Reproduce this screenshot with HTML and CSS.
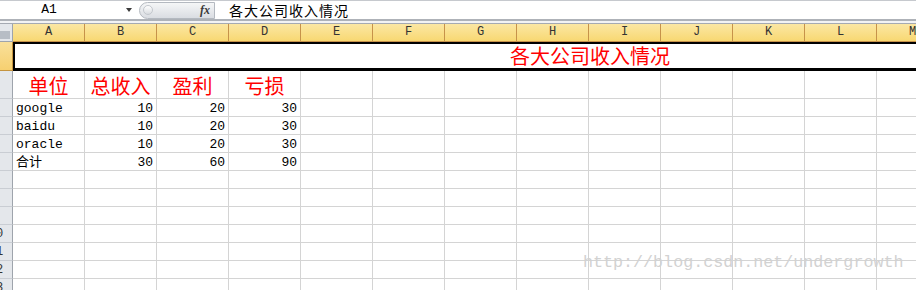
FILE: index.html
```html
<!DOCTYPE html>
<html lang="zh-CN">
<head>
    <meta charset="UTF-8">
    <title>各大公司收入情况</title>
    <link rel="stylesheet" href="styles.css">
</head>
<body>
    <div class="formula-bar">
        <div class="name-box">A1</div>
        <div class="name-arrow"><span class="tri"></span></div>
        <div class="fx-box"><span class="knob"></span><span class="fx">fx</span></div>
        <div class="formula">各大公司收入情况</div>
    </div>
    <div class="bar-gap"></div>

    <div class="sheet">
        <div class="row head">
            <div class="rh corner"><span class="corner-tri"></span></div>
            <div class="ch">A</div><div class="ch">B</div><div class="ch">C</div><div class="ch">D</div>
            <div class="ch">E</div><div class="ch">F</div><div class="ch">G</div><div class="ch">H</div>
            <div class="ch">I</div><div class="ch">J</div><div class="ch">K</div><div class="ch">L</div>
            <div class="ch">M</div>
        </div>

        <div class="row r1">
            <div class="rh sel"></div>
            <div class="title">各大公司收入情况</div>
        </div>

        <div class="row r2">
            <div class="rh"></div>
            <div class="c hd">单位</div><div class="c hd">总收入</div><div class="c hd">盈利</div><div class="c hd">亏损</div>
            <div class="c"></div><div class="c"></div><div class="c"></div><div class="c"></div><div class="c"></div>
            <div class="c"></div><div class="c"></div><div class="c"></div><div class="c"></div>
        </div>

        <div class="row">
            <div class="rh"></div>
            <div class="c">google</div><div class="c num">10</div><div class="c num">20</div><div class="c num">30</div>
            <div class="c"></div><div class="c"></div><div class="c"></div><div class="c"></div><div class="c"></div>
            <div class="c"></div><div class="c"></div><div class="c"></div><div class="c"></div>
        </div>
        <div class="row">
            <div class="rh"></div>
            <div class="c">baidu</div><div class="c num">10</div><div class="c num">20</div><div class="c num">30</div>
            <div class="c"></div><div class="c"></div><div class="c"></div><div class="c"></div><div class="c"></div>
            <div class="c"></div><div class="c"></div><div class="c"></div><div class="c"></div>
        </div>
        <div class="row">
            <div class="rh"></div>
            <div class="c">oracle</div><div class="c num">10</div><div class="c num">20</div><div class="c num">30</div>
            <div class="c"></div><div class="c"></div><div class="c"></div><div class="c"></div><div class="c"></div>
            <div class="c"></div><div class="c"></div><div class="c"></div><div class="c"></div>
        </div>
        <div class="row">
            <div class="rh"></div>
            <div class="c">合计</div><div class="c num">30</div><div class="c num">60</div><div class="c num">90</div>
            <div class="c"></div><div class="c"></div><div class="c"></div><div class="c"></div><div class="c"></div>
            <div class="c"></div><div class="c"></div><div class="c"></div><div class="c"></div>
        </div>

        <div class="row">
            <div class="rh"></div>
            <div class="c"></div><div class="c"></div><div class="c"></div><div class="c"></div><div class="c"></div>
            <div class="c"></div><div class="c"></div><div class="c"></div><div class="c"></div><div class="c"></div>
            <div class="c"></div><div class="c"></div><div class="c"></div>
        </div>
        <div class="row">
            <div class="rh"></div>
            <div class="c"></div><div class="c"></div><div class="c"></div><div class="c"></div><div class="c"></div>
            <div class="c"></div><div class="c"></div><div class="c"></div><div class="c"></div><div class="c"></div>
            <div class="c"></div><div class="c"></div><div class="c"></div>
        </div>
        <div class="row">
            <div class="rh"></div>
            <div class="c"></div><div class="c"></div><div class="c"></div><div class="c"></div><div class="c"></div>
            <div class="c"></div><div class="c"></div><div class="c"></div><div class="c"></div><div class="c"></div>
            <div class="c"></div><div class="c"></div><div class="c"></div>
        </div>
        <div class="row">
            <div class="rh"><span>10</span></div>
            <div class="c"></div><div class="c"></div><div class="c"></div><div class="c"></div><div class="c"></div>
            <div class="c"></div><div class="c"></div><div class="c"></div><div class="c"></div><div class="c"></div>
            <div class="c"></div><div class="c"></div><div class="c"></div>
        </div>
        <div class="row">
            <div class="rh"><span>11</span></div>
            <div class="c"></div><div class="c"></div><div class="c"></div><div class="c"></div><div class="c"></div>
            <div class="c"></div><div class="c"></div><div class="c"></div><div class="c"></div><div class="c"></div>
            <div class="c"></div><div class="c"></div><div class="c"></div>
        </div>
        <div class="row">
            <div class="rh"><span>12</span></div>
            <div class="c"></div><div class="c"></div><div class="c"></div><div class="c"></div><div class="c"></div>
            <div class="c"></div><div class="c"></div><div class="c"></div><div class="c"></div><div class="c"></div>
            <div class="c"></div><div class="c"></div><div class="c"></div>
        </div>
        <div class="row">
            <div class="rh"><span>13</span></div>
            <div class="c"></div><div class="c"></div><div class="c"></div><div class="c"></div><div class="c"></div>
            <div class="c"></div><div class="c"></div><div class="c"></div><div class="c"></div><div class="c"></div>
            <div class="c"></div><div class="c"></div><div class="c"></div>
        </div>
    </div>

    <div class="watermark">http://blog.csdn.net/undergrowth</div>
</body>
</html>
```

FILE: styles.css
```css
* { box-sizing: border-box; }
body { margin: 0; width: 916px; height: 290px; overflow: hidden; background: #fff; position: relative;
       font-family: "Liberation Mono", "Noto Sans CJK SC", monospace; font-size: 13px; color: #000; }

/* formula bar */
.formula-bar { display: flex; align-items: center; height: 21px; border-top: 1px solid #c6c9ce; border-bottom: 2px solid #aeb2b8; }
.name-box { width: 98px; text-align: center; font-size: 13px; line-height: 18px; }
.name-arrow { width: 41px; padding-left: 28px; display: flex; align-items: center; }
.tri { width: 0; height: 0; border-left: 3px solid transparent; border-right: 3px solid transparent; border-top: 4px solid #3c3c3c; }
.fx-box { width: 76px; height: 17px; display: flex; align-items: center; border: 1px solid #b4b9c0; border-radius: 9px 0 0 9px;
          background: linear-gradient(#f5f6f7, #dadde2); }
.knob { width: 10px; height: 10px; margin-left: 3px; border-radius: 50%; border: 1px solid #c3c7cd;
        background: linear-gradient(#ffffff, #d9dce0); }
.fx { margin-left: auto; margin-right: 4px; font-family: "Liberation Serif", serif; font-style: italic; font-weight: bold;
      font-size: 12px; color: #3a3a3a; }
.formula { padding-left: 14px; font-family: "Noto Sans CJK SC", sans-serif; font-size: 14px; line-height: 18px; letter-spacing: 1px; }
.bar-gap { height: 2px; background: #f2f3f5; }

/* sheet */
.row { display: flex; height: 18px; }
.rh { flex: none; width: 13px; overflow: hidden; background: #e4e7eb; border-right: 1px solid #9ea4ac;
      border-bottom: 1px solid #c9cdd3; display: flex; align-items: center; }
.rh span { display: block; flex: none; width: 26px; margin-left: -17px; text-align: center; font-size: 12px; color: #333; }
.rh.sel { background: linear-gradient(#f9e09a, #f6d070); border-right-color: #c49440; border-bottom-color: #c49440; }

.head { height: 19px; border-top: 1px solid #a5aab2; }
.head .rh { border-bottom: 1px solid #9ea4ac; justify-content: flex-end; align-items: flex-end; padding: 0 2px 2px 0; }
.corner-tri { width: 0; height: 0; border-left: 8px solid transparent; border-bottom: 8px solid #b7bdc5; }
.ch { flex: none; width: 72px; text-align: center; font-size: 12px; line-height: 17px; color: #333;
      background: linear-gradient(#fbe7a4, #f8d872); border-right: 1px solid #c6924a; border-bottom: 1px solid #c6924a; }

.c { flex: none; width: 72px; border-right: 1px solid #d4d4d4; border-bottom: 1px solid #d4d4d4;
     display: flex; align-items: flex-end; padding: 0 3px 0 3px; line-height: 15px; white-space: nowrap; }
.c.num { justify-content: flex-end; }

.r1 { height: 29px; }
.title { flex: none; width: 1152px; border-left: 2px solid #000; border-top: 2px solid #000; border-bottom: 3px solid #000;
         text-align: center; color: #f00; font-family: "Noto Sans CJK SC", sans-serif; font-size: 20px; line-height: 23px; }

.r2 { height: 28px; }
.hd { justify-content: center; color: #f00; font-family: "Noto Sans CJK SC", sans-serif; font-size: 20px; line-height: 24px; padding-bottom: 0; }

.watermark { position: absolute; left: 583px; top: 253px; font-family: "Liberation Mono", monospace; font-size: 16.7px;
             color: #d2d2d2; white-space: nowrap; }
```
